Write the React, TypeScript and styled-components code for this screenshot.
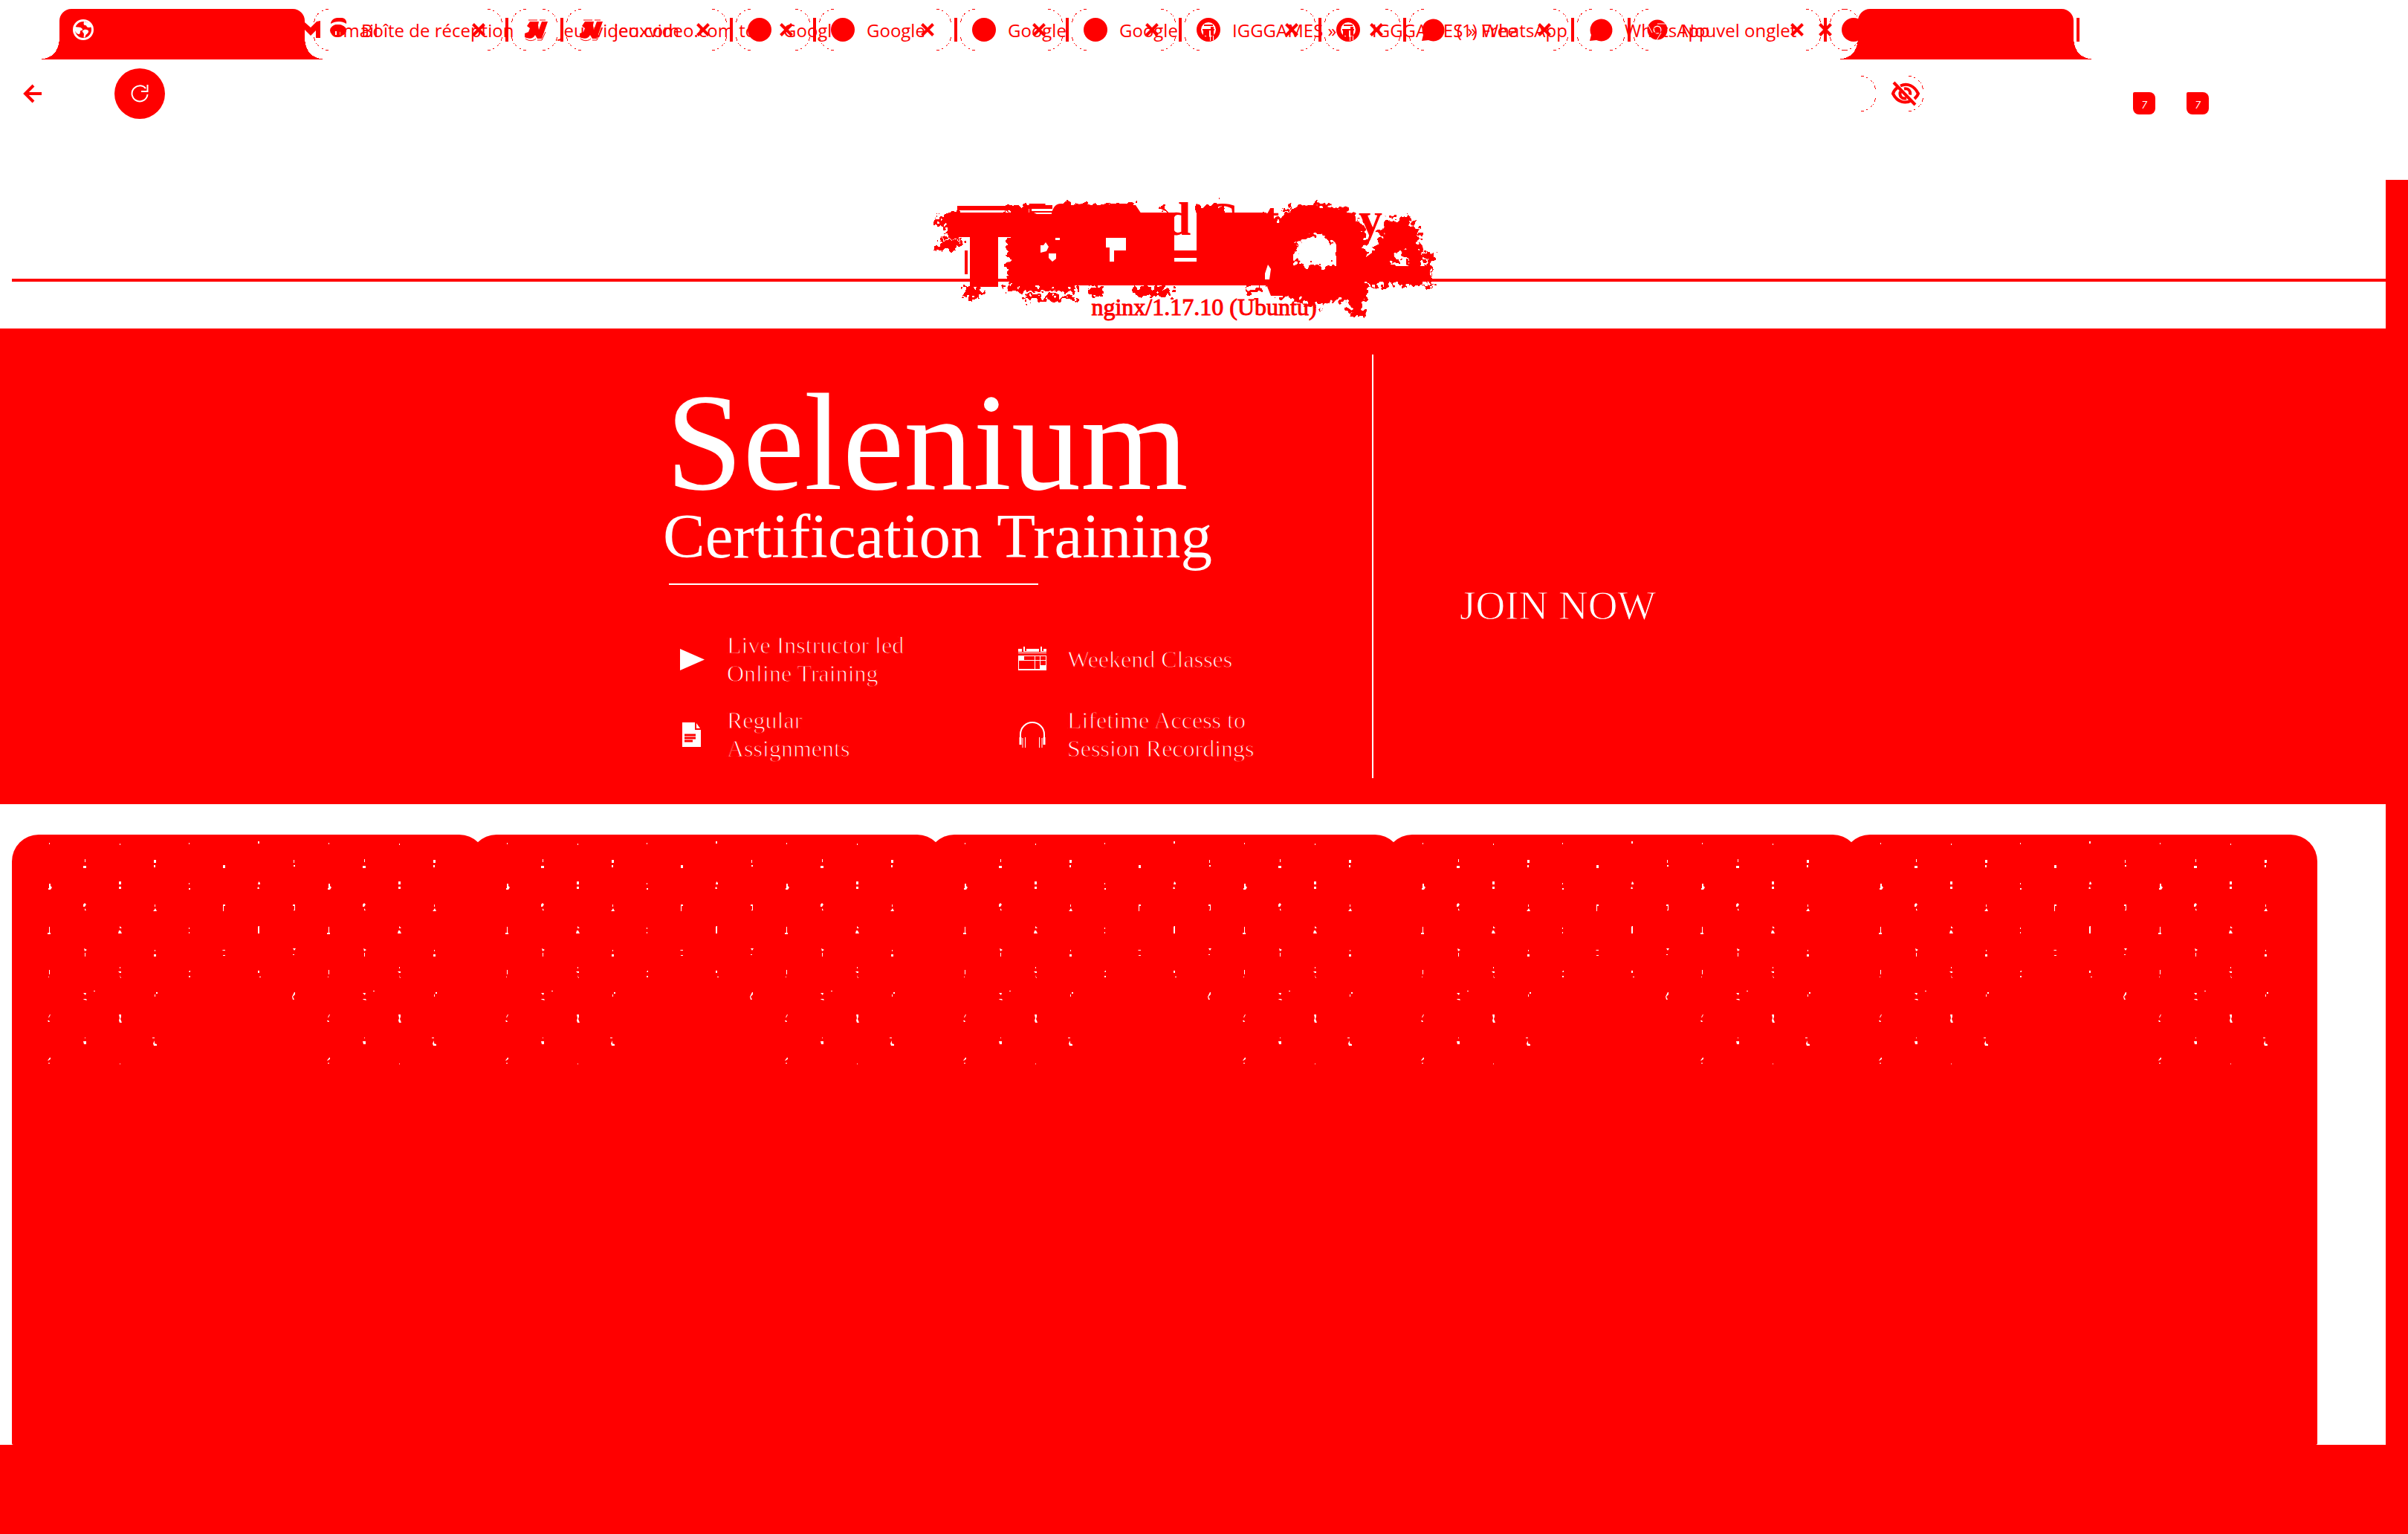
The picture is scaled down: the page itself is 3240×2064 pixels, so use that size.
import React from "react";
import styled, { createGlobalStyle } from "styled-components";

const RED = "#ff0000";
const UI = `"Open Sans", "Noto Sans", sans-serif`;
const SERIF = `"Liberation Serif", "Times New Roman", serif`;

const GlobalStyle = createGlobalStyle`
  *, *::before, *::after { box-sizing: border-box; }
  body { margin: 0; background: #fff; }
  button { margin: 0; padding: 0; border: 0; background: none; color: inherit; font: inherit; text-align: left; }
  svg { display: block; overflow: visible; }
`;

const Page = styled.div`
  position: relative;
  display: flex;
  flex-direction: column;
  min-height: 100vh;
  overflow: hidden;
  background: #fff;
  color: ${RED};
  font-family: ${UI};
`;

/* ---------- tab strip ---------- */

const TabStrip = styled.nav`
  display: flex;
  height: 80px;
  padding: 12px 0 0 80px;
`;

const ActiveTab = styled.div<{ $width: number }>`
  position: relative;
  flex: none;
  width: ${(p) => p.$width}px;
  height: 68px;
  padding: 14px 18px;
  border-radius: 16px 16px 0 0;
  background: ${RED};
  &::before,
  &::after {
    content: "";
    position: absolute;
    bottom: 0;
    width: 24px;
    height: 24px;
  }
  &::before {
    left: -24px;
    background: radial-gradient(circle at 0 0, transparent 23px, ${RED} 23px);
  }
  &::after {
    right: -24px;
    background: radial-gradient(circle at 100% 0, transparent 23px, ${RED} 23px);
  }
`;

const TabList = styled.div`
  position: relative;
  display: flex;
  margin: 0 4px 0 8px;
`;

const TabCell = styled.div<{ $width: number }>`
  position: relative;
  display: flex;
  align-items: center;
  gap: 16px;
  flex: none;
  width: ${(p) => p.$width}px;
  height: 56px;
  padding-left: 20px;
`;

const Pill = styled.span`
  position: absolute;
  inset: 0 8px 0 4px;
  display: flex;
  justify-content: space-between;
`;

const Separator = styled.span`
  flex: none;
  width: 4px;
  height: 32px;
  margin: 12px 0 0 4px;
  background: ${RED};
`;

const CellSeparator = styled(Separator)`
  position: absolute;
  right: 0;
  top: 0;
`;

const Favicon = styled.span`
  flex: none;
  width: 32px;
  height: 32px;
`;

const TabLabel = styled.button`
  flex: 1;
  width: 0;
  padding-top: 2px;
  font-size: 24px;
  line-height: 32px;
  white-space: nowrap;
`;

const CloseButton = styled.button`
  position: absolute;
  right: 32px;
  top: 20px;
  width: 16px;
  height: 16px;
`;

const GhostTab = styled.span`
  position: absolute;
  left: -8px;
  top: 12px;
  display: flex;
  gap: 12px;
  font-size: 24px;
  line-height: 34px;
`;

const PillEnd = ({ flip = false, height = 56 }: { flip?: boolean; height?: number }) => (
  <svg width="20" height={height} viewBox={`0 0 20 ${height}`} fill="none" stroke={RED} strokeWidth="1" shapeRendering="crispEdges">
    <g transform={flip ? "translate(20 0) scale(-1 1)" : undefined} strokeDasharray="4 3 2 2 1 2 3 2 1 3 5 2">
      <path d="M20 .5A20 20 0 0 0 .5 20" />
      <path d={`M20 ${height - 0.5}A20 20 0 0 1 .5 ${height - 20}`} />
    </g>
  </svg>
);

const Cross = () => (
  <svg width="16" height="16" viewBox="0 0 16 16" stroke={RED} strokeWidth="4">
    <path d="M.5.5l15 15M15.500.5l-15 15" />
  </svg>
);

const Globe = () => (
  <svg width="28" height="28" viewBox="0 0 28 28" fill="none">
    <circle cx="14" cy="14" r="12.500" stroke="#fff" strokeWidth="3" />
    <path d="M3 10c5 1 7 0 9 2s1 3-1 3 0 5-3 5S3 16 2 14zM15 3c-1 4 0 5 2 5s1 3 4 3 3-1 5 0l-4-6zM15 14c2-1 7 0 6 3s-4 3-4 6l-2 2c-1-3 1-5-1-7s-1-3 1-4z" fill="#fff" />
  </svg>
);

type IconName = "mail" | "jv" | "dot" | "igg" | "bubble" | "chrome";

const icons: Record<IconName, React.ReactNode> = {
  mail: (
    <>
      <path d="M7 8C7 4 11 0 16 0h6c4 0 7 4 6 8-3-2-6-3-10-3S10 6 7 8z" fill={RED} />
      <ellipse cx="17" cy="17" rx="11" ry="8" fill={RED} />
      <path d="M14 18v5M20 18v5" stroke="#fff" strokeWidth="2" />
    </>
  ),
  jv: (
    <>
      <path d="M9 5h12l-1 5 1 6 4-11h8l-8 23h-6l-3-5c-2 5-8 6-14 3v-5l5-2 2-5-4-3z" fill={RED} />
      <path d="M7 3h12M22 3h8M3 28c5 4 11 3 14 0M19 30h6l5-11" stroke={RED} fill="none" />
    </>
  ),
  dot: <circle cx="16" cy="16" r="16" fill={RED} />,
  igg: (
    <>
      <circle cx="16" cy="16" r="13" stroke={RED} strokeWidth="6" fill="none" />
      <path d="M8 16h16M10 10h12" stroke={RED} strokeWidth="2" />
      <path d="M15 17v13M11 17v7M21 12v12" stroke={RED} strokeWidth="4" />
      <path d="M18.500 17v14M22.500 24v6" stroke="#fff" strokeWidth="1" />
    </>
  ),
  bubble: <path d="M1 31l2-8A15 15 0 1 1 10 30z" fill={RED} />,
  chrome: (
    <>
      <circle cx="16" cy="16" r="9.500" stroke={RED} strokeWidth="8" fill="none" />
      <circle cx="16" cy="16" r="4" fill={RED} />
      <path d="M16 8h13M9 20L3 9M21 20l-6 10" stroke="#fff" strokeWidth="1" />
    </>
  ),
};

const tabs: { icon: IconName; label: string; width: number; close: boolean }[] = [
  { icon: "mail", label: "Boîte de réception", width: 266, close: true },
  { icon: "jv", label: "Jeuxvideo.com", width: 74, close: false },
  { icon: "jv", label: "jeuxvideo.com to", width: 228, close: true },
  { icon: "dot", label: "Googl", width: 112, close: true },
  { icon: "dot", label: "Google", width: 190, close: true },
  { icon: "dot", label: "Google", width: 150, close: true },
  { icon: "dot", label: "Google", width: 152, close: true },
  { icon: "igg", label: "IGGGAMES »", width: 188, close: true },
  { icon: "igg", label: "IGGGAMES » Free", width: 114, close: true },
  { icon: "bubble", label: "(1) WhatsApp", width: 226, close: true },
  { icon: "bubble", label: "WhatsApp", width: 76, close: false },
  { icon: "chrome", label: "Nouvel onglet", width: 264, close: true },
  { icon: "dot", label: "", width: 38, close: true },
];

/* ---------- toolbar ---------- */

const Toolbar = styled.div`
  display: flex;
  align-items: center;
  height: 92px;
  padding: 0 268px 0 32px;
`;

const BackButton = styled.button`
  width: 24px;
  height: 24px;
`;

const ReloadButton = styled.button`
  display: grid;
  place-items: center;
  width: 68px;
  height: 68px;
  margin-left: 98px;
  border-radius: 50%;
  background: ${RED};
`;

const AddressBar = styled.div`
  display: flex;
  justify-content: flex-end;
  gap: 16px;
  flex: 1;
  margin-right: 282px;
`;

const EyeButton = styled.button`
  position: relative;
  display: flex;
  justify-content: flex-end;
  width: 48px;
  height: 48px;
  & > svg:last-child {
    position: absolute;
    left: 5px;
    top: 8px;
  }
`;

const Extensions = styled.div`
  display: flex;
  gap: 42px;
  padding-top: 26px;
`;

const Badge = styled.button`
  width: 30px;
  height: 30px;
  border-radius: 2px 8px 8px 8px;
  background: ${RED};
  color: #fff;
  font-size: 14px;
  font-style: italic;
  line-height: 34px;
  text-align: center;
`;

/* ---------- error page under the logo ---------- */

const ErrorPage = styled.header`
  position: relative;
  margin-top: 70px;
  padding: 16px 16px 10px;
  font-family: ${SERIF};
  text-align: center;
`;

const ErrorTitle = styled.h1`
  margin: 0;
  font-size: 64px;
  line-height: 74px;
  font-weight: 700;
`;

const Rule = styled.hr`
  height: 4px;
  margin: 43px 0 16px;
  border: 0;
  background: ${RED};
`;

const Server = styled.p`
  margin: 0;
  font-size: 32px;
  line-height: 37px;
  -webkit-text-stroke: 1px ${RED};
`;

const LogoLayer = styled.div`
  position: absolute;
  top: 28px;
  left: 50%;
  width: 680px;
  margin-left: -364px;
`;

const Logo = () => (
  <svg width="680" height="168" viewBox="1256 270 680 168" role="img" aria-label="ToolsQA">
    <defs>
      <filter id="rough" x="-5%" y="-10%" width="110%" height="120%">
        <feTurbulence type="fractalNoise" baseFrequency="0.13" numOctaves="2" seed="4" result="n" />
        <feDisplacementMap in="SourceGraphic" in2="n" scale="26" xChannelSelector="R" yChannelSelector="G" />
      </filter>
    </defs>
    <g fill={RED} stroke={RED}>
      <path d="M1288 280h70" strokeWidth="6" fill="none" />
      <path d="M1300 337v32" strokeWidth="4" fill="none" />
      <rect x="1282" y="286" width="100" height="33" stroke="none" />
      <rect x="1305" y="315" width="38" height="71" stroke="none" />
      <path stroke="none" fillRule="evenodd" d="M1362 286H1580V337H1610V286H1704V384H1362zM1488 320V333H1493V352H1499V337H1515V320zM1580 347V352H1610V347z" />
      <path stroke="none" d="M1380 276h36v5h-36zM1426 276h60l20 4v10h-118v-6h30zM1484 288v-12h44l8 12z" />
      <g filter="url(#rough)">
        <path stroke="none" d="M1272 286h20v34h-20zM1262 292h16v14h-16zM1262 322h32v14h-32zM1356 278h28v100h-28z" />
        <path stroke="none" d="M1350 276h30v8h-30zM1428 274h44v14h-44zM1470 284h26v-10h-26zM1500 276h28v16h-28zM1564 278h9v7h-9zM1612 276h38v16h-38zM1696 292h16v88h-16z" />
        <path stroke="none" d="M1298 386h22v14h-22zM1354 382h94v10h-94zM1466 384h18v14h-18zM1526 386h50v12h-50zM1378 397h66v6h-66zM1676 386h22v8h-22zM1714 380h40v18h-40zM1690 288h18v14h-18z" />
        <circle cx="1771" cy="342" r="48" fill="none" strokeWidth="40" />
        <path stroke="none" d="M1700 296h30v-16h80l28 30 2 80h-80l-40-10h-20v-32l30 10h80v-30l-20-20h-60l-20 30zM1750 384h90v20h-8l6 24h-18l-8-22-24-6-12 16z" />
        <path stroke="none" fillRule="evenodd" d="M1868 292h30l32 92h-104zM1884 334l-12 20h24zM1908 310h6v10h-6zM1914 340h14v42h-14z" />
      </g>
      <path stroke="none" d="M1832 350l20-14 12 22h60v20h-100z" />
      <path stroke="none" d="M1706 302h20l20-22h52l30 26 6 40-4 36h-24l-8-16v-38l-16-16h-26l-16 16v36l20 22h30v12h-80l-8-20z" />
    </g>
    <g fill="#fff">
      <path d="M1400 330h4l3-4 4 6-3 6-8 2zM1411 341h10v7l-5 4-5-5zM1420 320h6v3h-6zM1391 286l24 0v2h-20zM1344 322l6 2v46l-6 4zM1702 368l4-12 4 6-2 14h-6z" />
    </g>
  </svg>
);

/* ---------- training banner ---------- */

const Hero = styled.section`
  display: flex;
  justify-content: center;
  padding: 35px 0;
  background: ${RED};
  color: #fff;
  font-family: ${SERIF};
`;

const Course = styled.div`
  width: 952px;
  height: 570px;
  padding-top: 30px;
  border-right: 2px solid #fff;
`;

const CourseName = styled.h2`
  margin: 0;
  font-size: 186px;
  line-height: 176px;
  font-weight: 400;
`;

const CourseKind = styled.p`
  margin: 0 0 0 -4px;
  font-size: 85px;
  line-height: 76px;
  font-variant-ligatures: none;
`;

const CourseRule = styled.hr`
  width: 497px;
  height: 2px;
  margin: 26px 0 62px 4px;
  border: 0;
  background: #fff;
`;

const FeatureGrid = styled.ul`
  display: grid;
  grid-template-columns: 458px 1fr;
  row-gap: 25px;
  margin: 0;
  padding: 0 0 0 16px;
  list-style: none;
`;

const Feature = styled.li`
  display: flex;
  align-items: center;
  gap: 26px;
  font-size: 32px;
  line-height: 38px;
  white-space: pre-line;
  -webkit-text-stroke: 1px ${RED};
  & > svg {
    flex: none;
  }
`;

const JoinColumn = styled.div`
  width: 496px;
  padding: 306px 0 0 116px;
`;

const JoinLink = styled.a`
  color: #fff;
  font-size: 55px;
  line-height: 64px;
  text-decoration: none;
  -webkit-text-stroke: 1px ${RED};
`;

const PlayIcon = () => (
  <svg width="40" height="40" viewBox="0 0 40 40" fill="#fff">
    <path d="M3 6l33 14.500L3 35z" />
  </svg>
);

const CalendarIcon = () => (
  <svg width="40" height="40" viewBox="0 0 40 40" fill="#fff">
    <path d="M0 6h5v4h2V3h2v6h2V6h17v4h2V3h2v6h2V6h4v4H0zM0 11h38v1H0z" />
    <path fillRule="evenodd" d="M0 15h38v20H0zM8 16v5h14v-5zM23 16v5h6v-5zM30 16v5h7v-5zM1 22v11h21V22zM23 22v11h6V22zM30 22v6h7v-6z" />
  </svg>
);

const DocumentIcon = () => (
  <svg width="40" height="40" viewBox="0 0 40 40">
    <path d="M6 4h17v10h8v23H6z" fill="#fff" />
    <path d="M25 5l5 7h-5z" fill="#fff" />
    <path d="M9 21h15M9 25h15M9 29h11" stroke={RED} strokeWidth="3" />
  </svg>
);

const HeadphonesIcon = () => (
  <svg width="40" height="40" viewBox="0 0 40 40" fill="none" stroke="#fff">
    <path d="M3 28V20a16 16 0 0 1 32 0v8" strokeWidth="2" />
    <path d="M3 24v10M35 24v10" strokeWidth="3" />
    <path d="M9.500 24v14M28.500 24v14M6 25v13M32 25v13" />
  </svg>
);

const features = [
  { icon: <PlayIcon />, text: "Live Instructor led\nOnline Training" },
  { icon: <CalendarIcon />, text: "Weekend Classes" },
  { icon: <DocumentIcon />, text: "Regular\nAssignments" },
  { icon: <HeadphonesIcon />, text: "Lifetime Access to\nSession Recordings" },
];

/* ---------- cards ---------- */

const CardRow = styled.main`
  display: flex;
  padding: 41px 144px 0 16px;
`;

const Card = styled.article`
  flex: 1;
  min-width: 0;
  min-height: 821px;
  margin-right: -22px;
  border-radius: 36px 36px 2px 2px;
  background: ${RED};
`;

const Footer = styled.footer`
  flex: 1;
  min-height: 120px;
  background: ${RED};
`;

const ScrollTrack = styled.div`
  position: absolute;
  top: 242px;
  right: 0;
  bottom: 0;
  width: 30px;
  background: ${RED};
`;

const columnX = [50, 98, 145, 192, 238, 285, 332, 379, 426, 474, 521, 568];

/* Each row: its y, then one path per visible column of the repeating tile. */
const speckRows: { y: number; marks: Record<number, string> }[] = [
  { y: 12, marks: { 0: "M0-1h1v2h-1z", 2: "M0 0h1v2h-1z", 4: "M0-1h1v2h-1z", 6: "M-1-3h2v3h-2z" } },
  { y: 39, marks: { 1: "M0-6h1v4h-1zM-2 3h4v3h-4z", 3: "M-1-5h3v4h-3zM-1 2h2v3h-2z", 5: "M-1 2h3v4h-3z", 7: "M0-5h1v4h-1zM0 2h2v2h-2z" } },
  { y: 71, marks: { 0: "M0-5h2v3l2 2-2 3h-3v-2h1z", 2: "M-1-8h3v4h-3zM-1-1h3v3h-3z", 4: "M0-6h1v2h-1zM0 1h2v2h-2z", 6: "M0-8l2 2v2h-3zM-2 1l2-2 1 3h-2z" } },
  { y: 98, marks: { 1: "M-2-4l2-2 2 2-2 3h-2zM0 1l2 3h-2z", 3: "M0-4h1v3h-1zM-1 4l2-3 2 4h-5z", 5: "M-1-4h3v2h-2v7h-1z", 7: "M-1-4h3v8h-2v-1h1v-5h-2z" } },
  { y: 129, marks: { 0: "M0-5h1v8h1v2h-4v-2h2z", 2: "M0-6l3 3h-3zM-1 0h2l2 4h-5z", 4: "M0-4h1v2h-1zM0 2h1v2h-1z", 6: "M0-6h1v10h-2v-9z" } },
  { y: 158, marks: { 1: "M-1-5l4 2-3 2zM0 1h1v5h-1z", 3: "M0-3h1v2h-1zM-1 3h3v3h-3z", 5: "M-1-3h3v1h-4zM-1 4h3v1h-3z", 7: "M-1-5h4l-2 3zM-1 3h2v1h-2z" } },
  { y: 187, marks: { 0: "M0-5h1v6h-1zM-1 4h1v1h-1z", 2: "M0-9h1v2h-1zM-2-3h4v2h-2zM0 2l2 4h-1z", 4: "M1-4h1v2h-2zM0 3h2v2h-2z", 6: "M-1-4h2v3h-2zM1 4h2v1h-2z" } },
  { y: 218, marks: { 1: "M-2-5h4l-1 3zM-2 3h4l1 2-4-1zM12-8h2v1h-2z", 3: "M2-6h2v2h-2zM0-3h1v3h-1z", 7: "M1-6h1v3l-3 3 2 4h-2l-1-4z" } },
  { y: 247, marks: { 0: "M1-5h1l-2 4h-1zM-2 3h2l1 2h-2z", 2: "M-1-5h3v3l-1 3 2 5h-3l-1-3 1-3z" } },
  { y: 277, marks: { 1: "M0-4h1v1h-1zM-2 1h4v4h-3z", 3: "M-3-4h3v1h-3zM0 0v4l3 1v2h-4l-1-3z" } },
  { y: 304, marks: { 0: "M1-4h1v2l-3 2h-1zM-1 3h2v1h-2z", 2: "M0 4h1v1h-1z" } },
];

const Specks = () => (
  <svg width="580" height="320" viewBox="0 0 580 320" fill="#fff" aria-hidden="true">
    {speckRows.map((row) =>
      columnX.map((x, column) => {
        const mark = row.marks[column % 8];
        return mark ? <path key={`${row.y}-${column}`} transform={`translate(${x} ${row.y})`} d={mark} /> : null;
      })
    )}
  </svg>
);

export default function App() {
  return (
    <Page>
      <GlobalStyle />
      <TabStrip aria-label="Tabs">
        <ActiveTab $width={330}>
          <Globe />
        </ActiveTab>
        <TabList>
          {tabs.map((tab, i) => (
            <TabCell key={i} $width={tab.width}>
              <Pill>
                <PillEnd />
                <PillEnd flip />
              </Pill>
              <Favicon>
                <svg width="32" height="32" viewBox="0 0 32 32">{icons[tab.icon]}</svg>
              </Favicon>
              {tab.label && <TabLabel>{tab.label}</TabLabel>}
              {tab.close && (
                <CloseButton aria-label="Close tab">
                  <Cross />
                </CloseButton>
              )}
              {i < tabs.length - 1 && <CellSeparator />}
            </TabCell>
          ))}
          <GhostTab>
            <svg width="22" height="32" viewBox="0 0 22 32">
              <path d="M0 6l8 7 8-8 5-1v23h-6V17l-7 7-8-8z" fill={RED} />
            </svg>
            Gmail
          </GhostTab>
        </TabList>
        <ActiveTab $width={290} />
        <Separator />
      </TabStrip>

      <Toolbar>
        <BackButton aria-label="Back">
          <svg width="24" height="24" viewBox="0 0 24 24" fill="none" stroke={RED} strokeWidth="4">
            <path d="M24 12H3M13 1L2 12l11 11" />
          </svg>
        </BackButton>
        <ReloadButton aria-label="Reload">
          <svg width="24" height="24" viewBox="0 0 24 24" fill="none" stroke="#fff" strokeWidth="2">
            <path d="M20 5a10.500 10.500 0 1 0 2.500 8" />
            <path d="M22.500 0v9H14" />
          </svg>
        </ReloadButton>
        <AddressBar>
          <PillEnd flip height={48} />
          <EyeButton aria-label="Third-party cookies blocked">
            <PillEnd flip height={48} />
            <svg width="38" height="32" viewBox="0 0 38 32" fill="none" stroke={RED} strokeWidth="4">
              <path d="M12 5.500C22 1 31 6 36 16c-1 3-3 5-5 7M8 8c-3 2-5 5-6 8 6 12 17 14 25 9" />
              <path d="M17 9.500c6-1 9 3 8 8M12 13c-2 6 2 11 8 9" />
              <path d="M3 1l29 30" />
            </svg>
          </EyeButton>
        </AddressBar>
        <Extensions>
          <Badge>7</Badge>
          <Badge>7</Badge>
        </Extensions>
      </Toolbar>

      <ErrorPage>
        <ErrorTitle>502 Bad Gateway</ErrorTitle>
        <Rule />
        <Server>nginx/1.17.10 (Ubuntu)</Server>
        <LogoLayer>
          <Logo />
        </LogoLayer>
      </ErrorPage>

      <Hero>
        <Course>
          <CourseName>Selenium</CourseName>
          <CourseKind>Certification Training</CourseKind>
          <CourseRule />
          <FeatureGrid>
            {features.map((f) => (
              <Feature key={f.text}>
                {f.icon}
                <span>{f.text}</span>
              </Feature>
            ))}
          </FeatureGrid>
        </Course>
        <JoinColumn>
          <JoinLink href="#join">JOIN NOW</JoinLink>
        </JoinColumn>
      </Hero>

      <CardRow>
        {[0, 1, 2, 3, 4].map((n) => (
          <Card key={n}>
            <Specks />
          </Card>
        ))}
      </CardRow>
      <Footer />
      <ScrollTrack />
    </Page>
  );
}
